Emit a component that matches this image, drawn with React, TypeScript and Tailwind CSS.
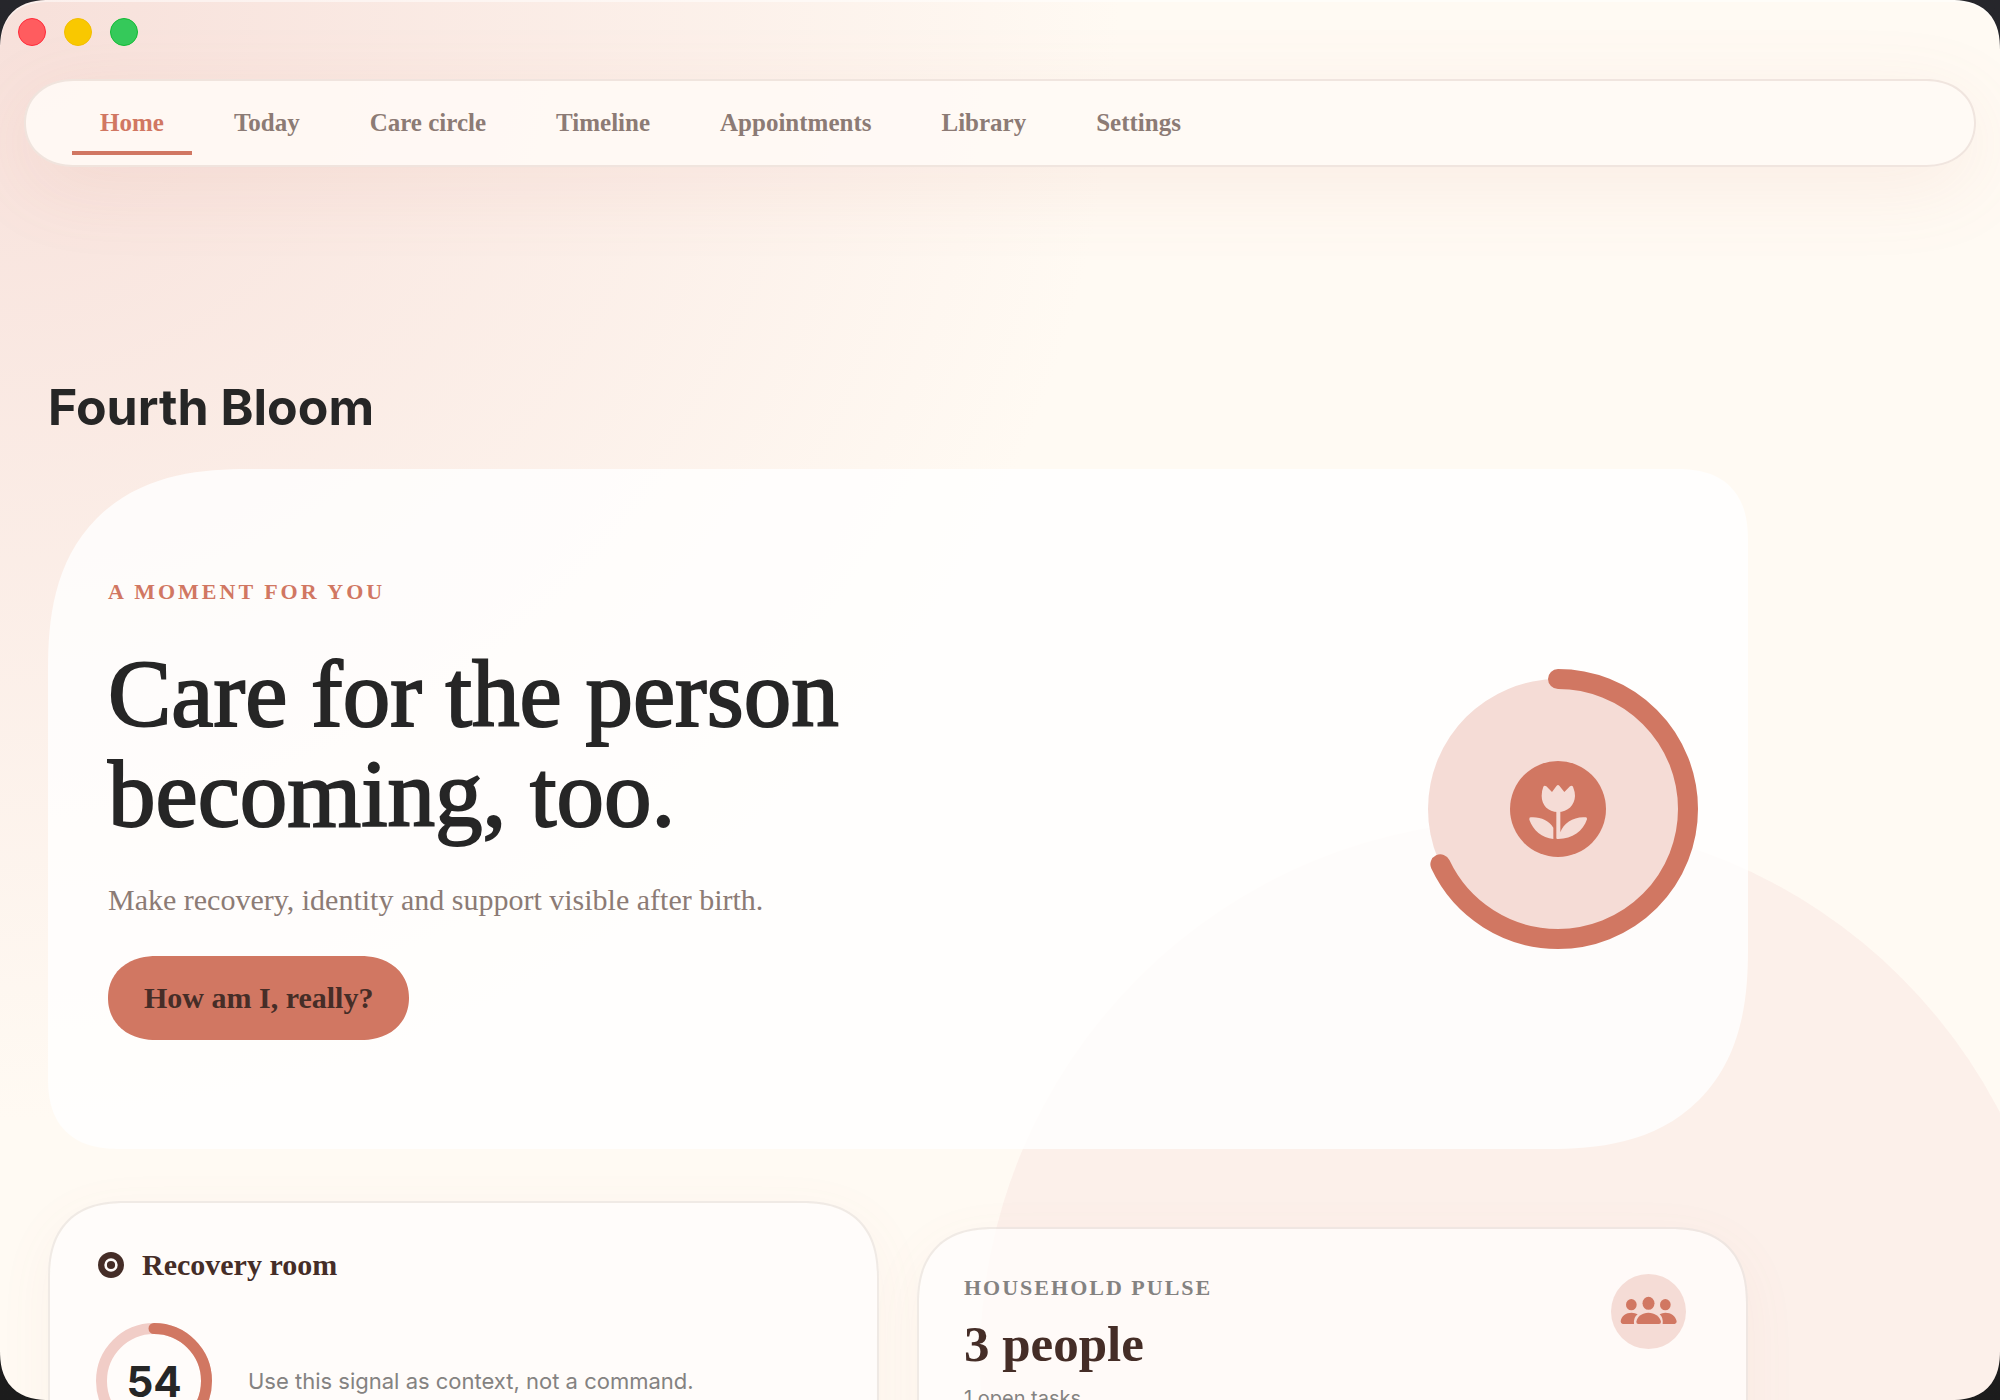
import { useState } from "react";

const tabs = ["Home", "Today", "Care circle", "Timeline", "Appointments", "Library", "Settings"];

const windowControls = [
  { label: "Close", className: "border-[#ff2a3a] bg-[#ff5c5f]" },
  { label: "Minimize", className: "border-[#f2bd00] bg-[#f9c800]" },
  { label: "Zoom", className: "border-[#12bb35] bg-[#35c95a]" },
];

function TitleBar() {
  return (
    <div className="flex gap-[18px] px-[18px] pt-[18px]">
      {windowControls.map((c) => (
        <button key={c.label} type="button" aria-label={c.label} className={`size-7 rounded-full border ${c.className}`} />
      ))}
    </div>
  );
}

function NavBar() {
  const [active, setActive] = useState("Home");

  return (
    <nav className="mx-6 mt-[33px] flex gap-3.5 rounded-[50px/44px] border-2 border-[#d9c5bf]/40 bg-[#fffaf5]/90 px-[46px] py-2.5 shadow-[0_20px_80px_rgba(209,119,98,0.1)] [corner-shape:superellipse(1.1)]">
      {tabs.map((tab) => (
        <button
          key={tab}
          type="button"
          onClick={() => setActive(tab)}
          className={`relative h-16 px-7 text-[25px] font-bold ${
            active === tab ? "text-[#d17762]" : "text-[#8c7b75]"
          }`}
        >
          {tab}
          {active === tab && <span className="absolute inset-x-0 bottom-0 h-1 bg-[#d17762]" />}
        </button>
      ))}
    </nav>
  );
}

function BloomRing() {
  return (
    <svg viewBox="83 117 780 780" className="size-[260px] shrink-0 overflow-visible" aria-hidden="true">
      <circle cx="473" cy="507" r="390" fill="#f5dcd6" />
      <circle
        cx="473"
        cy="507"
        r="390"
        fill="none"
        stroke="#d17762"
        strokeWidth="60"
        strokeLinecap="round"
        pathLength="100"
        strokeDasharray="68 100"
        transform="rotate(-90 473 507)"
      />
      <circle cx="473" cy="507" r="144" fill="#d17762" />
      <g fill="#f5dcd6">
        <path d="M429 440Q432 435 438 439L455 456L469 437Q473 433 477 437L492 456L509 439Q515 435 518 440Q524 455 524 468C523 495 503 516 473 516C443 516 424 495 424 468Q424 452 429 440Z" />
        <path d="M480 577C490 549 520 529 556 532Q561 532 560 538C548 574 515 598 471 597Q468 597 468 594V512H480Z" />
        <path d="M391 532C420 530 446 541 459 563V597C425 593 398 571 387 539Q386 532 391 532Z" />
      </g>
    </svg>
  );
}

function Hero() {
  return (
    <section className="mt-[31px] flex min-h-[680px] items-center justify-between rounded-tl-[200px] rounded-tr-[72px] rounded-br-[200px] rounded-bl-[72px] bg-white/80 px-[60px] [corner-shape:superellipse(1.3)]">
      <div>
        <p className="text-[22px] leading-7 font-bold tracking-[3px] text-[#d17762]">A MOMENT FOR YOU</p>
        <h2 className="mt-[38px] text-[95px] leading-[100px] text-[#262626] [-webkit-text-stroke:2px_#262626]">
          Care for the person
          <br />
          becoming, too.
        </h2>
        <p className="mt-[38px] text-[30px] leading-9 text-[#8c7b75]">
          Make recovery, identity and support visible after birth.
        </p>
        <button
          type="button"
          className="mt-[38px] h-[84px] rounded-[48px/42px] bg-[#d17762] px-9 pb-0.5 text-[30px] font-bold text-[#452d27] [corner-shape:superellipse(1.1)]"
        >
          How am I, really?
        </button>
      </div>
      <BloomRing />
    </section>
  );
}

function RecoveryCard() {
  const score = 54;

  return (
    <section className="h-[480px] rounded-[78px] border-2 border-[#e6dfdc]/60 bg-[#fffcfb]/80 bg-clip-padding px-[46px] pt-11 shadow-[0_16px_56px_rgba(209,119,98,0.06)] [corner-shape:superellipse(1.3)]">
      <div className="flex items-center gap-[18px]">
        <svg viewBox="0 0 28 28" className="size-7" aria-hidden="true">
          <circle cx="15" cy="14" r="13" fill="#452d27" />
          <circle cx="15" cy="14" r="5.4" fill="none" stroke="#fffcfa" strokeWidth="2.6" />
        </svg>
        <h3 className="text-[30px] leading-9 font-bold text-[#452d27]">Recovery room</h3>
      </div>
      <div className="mt-10 flex items-center gap-9">
        <div className="relative size-[116px]">
          <svg viewBox="0 0 116 116" className="size-full" aria-hidden="true">
            <circle cx="58" cy="58" r="52.5" fill="none" stroke="#f1cdc7" strokeWidth="11" />
            <circle
              cx="58"
              cy="58"
              r="52.5"
              fill="none"
              stroke="#d17762"
              strokeWidth="11"
              strokeLinecap="round"
              pathLength="100"
              strokeDasharray={`${score} 100`}
              transform="rotate(-90 58 58)"
            />
          </svg>
          <span className="absolute inset-0 flex items-center justify-center font-[Inter,sans-serif] text-[42px] font-bold text-[#262626]">
            {score}
          </span>
        </div>
        <p className="font-[Inter,sans-serif] text-[22px] text-[#848281]">Use this signal as context, not a command.</p>
      </div>
    </section>
  );
}

function HouseholdCard() {
  return (
    <section className="mt-[26px] flex h-[480px] items-start justify-between rounded-[78px] border-2 border-[#e6dfdc]/60 bg-[#fffcfb]/80 bg-clip-padding pt-[45px] pr-[60px] pl-[45px] shadow-[0_16px_56px_rgba(209,119,98,0.06)] [corner-shape:superellipse(1.3)]">
      <div>
        <p className="text-[22px] leading-7 font-bold tracking-[2px] text-[#848281]">HOUSEHOLD PULSE</p>
        <p className="mt-3 text-[51px] leading-[60px] font-bold text-[#452d27]">3 people</p>
        <p className="mt-2.5 font-[Inter,sans-serif] text-[20px] leading-7 text-[#848281]">1 open tasks</p>
      </div>
      <svg viewBox="151 285 225 225" className="size-[75px]" aria-hidden="true">
        <circle cx="263.5" cy="397.5" r="112.5" fill="#f5dcd6" />
        <g fill="#d17762">
          <ellipse cx="212" cy="377" rx="16" ry="17" />
          <ellipse cx="314" cy="377" rx="16" ry="17" />
          <ellipse cx="263.5" cy="373" rx="18" ry="19.5" />
          <path d="M220 435H186Q180 435 180 427C182 411 196 401 213 401Q223 401 231 406Q218 415 220 435Z" />
          <path d="M306 435H342Q348 435 348 427C345 411 331 401 314 401Q305 401 297 406Q308 415 306 435Z" />
          <path d="M233 435Q227 435 227 428C230 412 245 401 263 401C282 401 297 412 301 428Q301 435 295 435Z" />
        </g>
      </svg>
    </section>
  );
}

export default function App() {
  return (
    <div className="h-screen bg-linear-to-b from-[#26262b] to-[#1c1c1c]">
      <div className="relative isolate h-full overflow-hidden rounded-[50px] bg-[#fffaf3] bg-[radial-gradient(circle_1120px_at_0_0,#f7e0da,#fffaf300)] font-['Liberation_Serif',serif] shadow-[inset_0_2px_0_rgba(255,255,255,0.5)] [corner-shape:superellipse(1.3)]">
        {/* soft disc behind the lower right of the page */}
        <div className="absolute -right-[60px] -bottom-[500px] -z-10 size-[1080px] rounded-full bg-[#f2c6c8]/20" />
        <TitleBar />
        <NavBar />
        <main className="max-w-[1796px] px-12 pt-[209px]">
          <h1 className="font-[Inter,sans-serif] text-[50px] leading-[62px] font-bold text-[#262626]">Fourth Bloom</h1>
          <Hero />
          <div className="mt-[52px] grid grid-cols-2 gap-[38px]">
            <RecoveryCard />
            <HouseholdCard />
          </div>
        </main>
      </div>
    </div>
  );
}
